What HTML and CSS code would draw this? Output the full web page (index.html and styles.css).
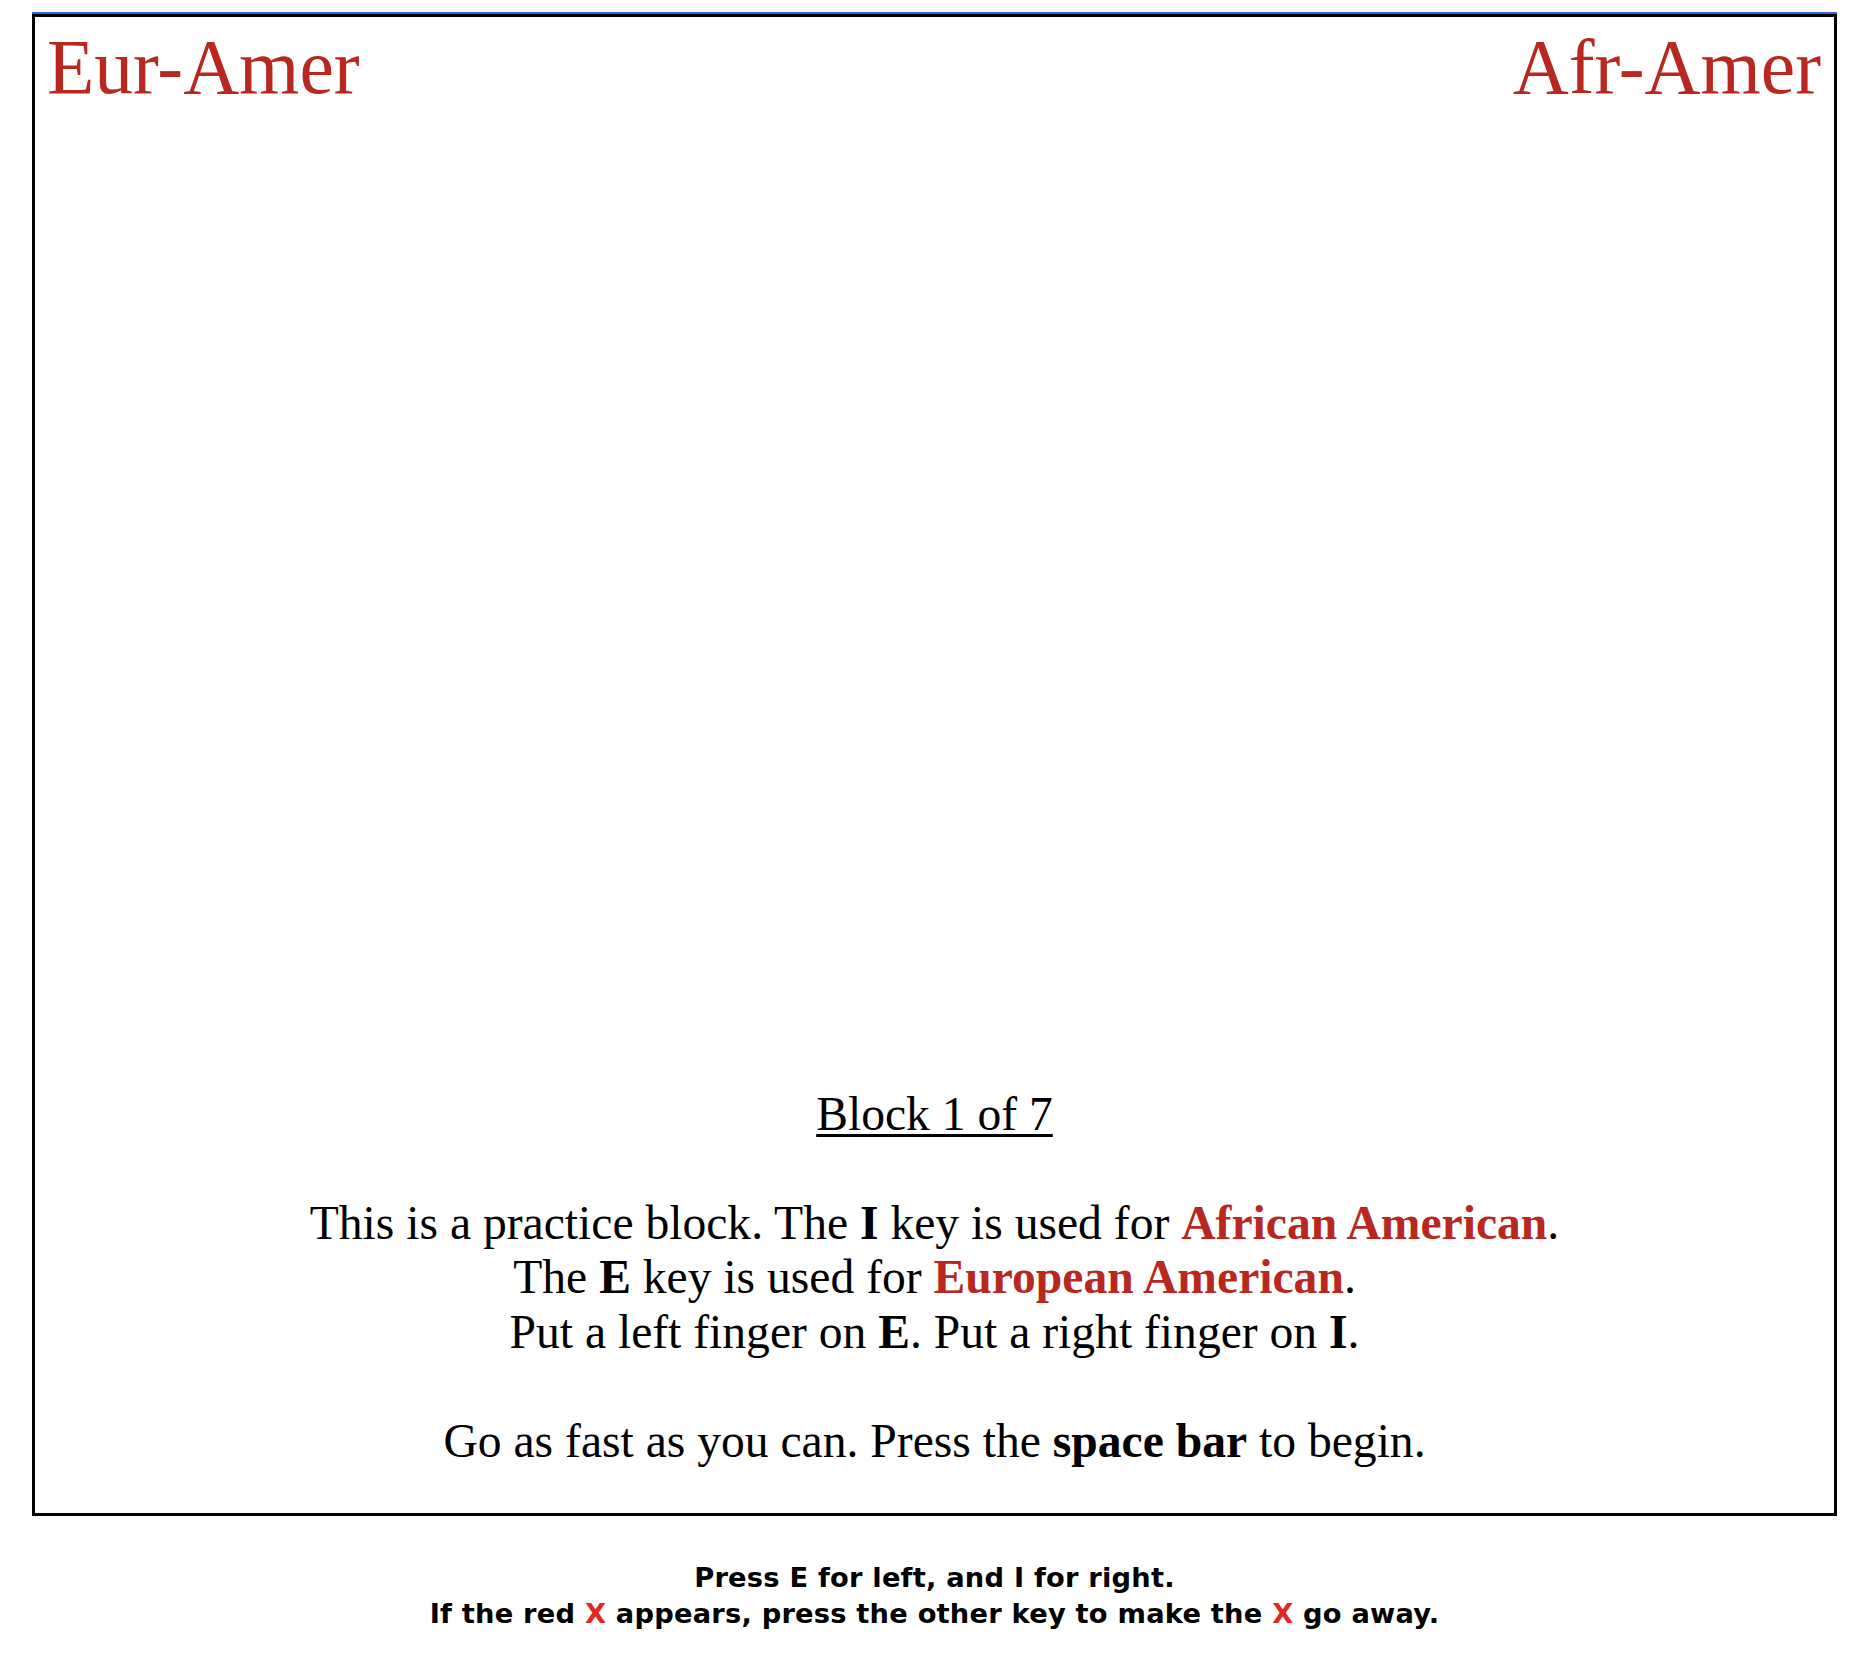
FILE: index.html
```html
<!DOCTYPE html>
<html lang="en">
<head>
<meta charset="utf-8">
<title>IAT Block 1 of 7</title>
<link rel="stylesheet" href="styles.css">
</head>
<body>
<div class="frame">
  <div class="box">
    <div class="labels">
      <div class="label label-left">Eur-Amer</div>
      <div class="label label-right">Afr-Amer</div>
    </div>
    <div class="instructions">
      <span class="block-title">Block 1 of 7</span><br><br>
      This is a practice block. The <b>I</b> key is used for <b class="cat">African American</b>.<br>
      The <b>E</b> key is used for <b class="cat">European American</b>.<br>
      Put a left finger on <b>E</b>. Put a right finger on <b>I</b>.<br><br>
      Go as fast as you can. Press the <b>space bar</b> to begin.
    </div>
  </div>
  <div class="footer">
    <div>Press E for left, and I for right.</div>
    <div>If the red <span class="x">X</span> appears, press the other key to make the <span class="x">X</span> go away.</div>
  </div>
</div>
</body>
</html>
```

FILE: styles.css
```css
html, body {
  margin: 0;
  padding: 0;
  background: #ffffff;
}

body {
  font-family: "Liberation Serif", "Times New Roman", serif;
  color: #000;
}

.frame {
  margin: 12px 0 0 32px;
  width: 1805px;
}

.box {
  box-sizing: border-box;
  height: 1504px;
  border: 3px solid #000;
  border-top: 5px solid #000;
  position: relative;
  display: flex;
  flex-direction: column;
}

.box::before {
  content: "";
  position: absolute;
  left: -3px;
  right: -3px;
  top: -5px;
  height: 2px;
  background: #2f68d6;
}

.labels {
  display: flex;
  justify-content: space-between;
  padding: 8px 13px 0 12px;
}

.label {
  font-size: 77.5px;
  color: #b8281f;
  line-height: 85px;
}

.instructions {
  margin-top: auto;
  padding-bottom: 45px;
  text-align: center;
  font-size: 47.6px;
  line-height: 54.5px;
}

.block-title {
  text-decoration: underline;
  text-decoration-thickness: 3px;
  text-underline-offset: 4px;
}

.cat {
  color: #b8281f;
}

.footer {
  margin-top: 44px;
  text-align: center;
  font-family: "DejaVu Sans", Verdana, sans-serif;
  font-weight: bold;
  font-size: 27.3px;
  line-height: 36px;
  letter-spacing: 0.2px;
}

.x {
  color: #e3281d;
}
```
